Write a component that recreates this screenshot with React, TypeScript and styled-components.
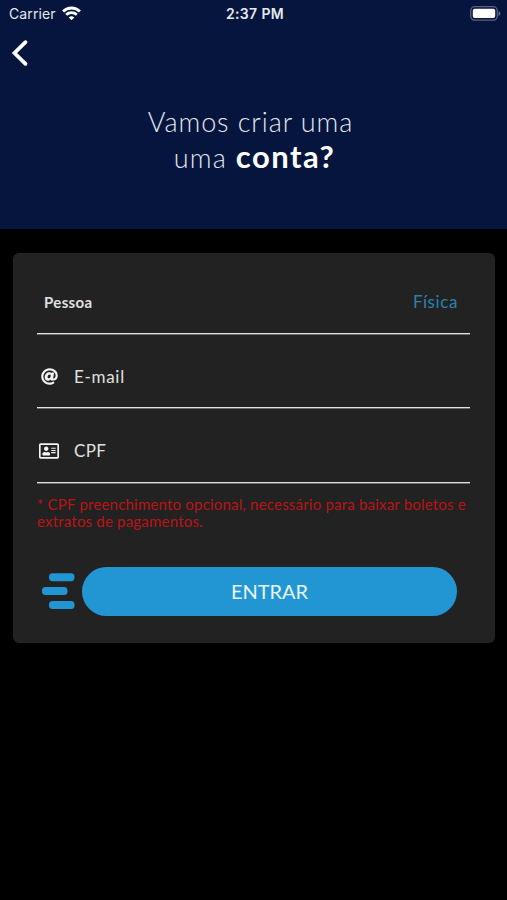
import React from "react";
import styled, { createGlobalStyle } from "styled-components";
import { FaAt, FaRegAddressCard } from "react-icons/fa";

const GlobalStyle = createGlobalStyle`
  *, *::before, *::after { box-sizing: border-box; }
  body { margin: 0; background: #000; font-family: Lato, sans-serif; }
`;

const Screen = styled.main`
  width: 507px;
  height: 900px;
  background: #000;
  overflow: hidden;
`;

const Header = styled.header`
  height: 229px;
  background: #05153d;
  color: #fff;
`;

const StatusBar = styled.div`
  height: 27px;
  padding: 0 6px 0 9px;
  display: grid;
  grid-template-columns: 1fr auto 1fr;
  align-items: center;
  font-family: Inter, sans-serif;
  font-size: 14px;
  color: #e6e9f0;
`;

const Carrier = styled.div`
  display: flex;
  align-items: center;
  gap: 6px;
  letter-spacing: 0.12px;
`;

const Clock = styled.div`
  font-size: 14px;
  font-weight: 600;
  letter-spacing: 0.35px;
`;

const BatterySlot = styled.div`
  display: flex;
  justify-content: flex-end;
`;

const BackButton = styled.button`
  display: block;
  width: 40px;
  height: 52px;
  padding: 0 0 0 10px;
  border: 0;
  background: none;
  color: #fff;
  svg { display: block; }
`;

const Title = styled.h1`
  margin: 25px 0 0;
  padding-right: 6px;
  text-align: center;
  font-size: 27px;
  line-height: 35px;
  font-weight: 300;
  color: #e3e7f0;
`;

const TitleLine = styled.span<{ $spacing: number; $indent?: number }>`
  display: block;
  height: 35px;
  padding-left: ${(p) => p.$indent ?? 0}px;
  letter-spacing: ${(p) => p.$spacing}px;
  b {
    font-size: 31px;
    font-weight: 700;
    color: #fff;
    letter-spacing: 1.5px;
  }
`;

const Card = styled.form`
  margin: 24px 12px 0 13px;
  height: 390px;
  padding: 18px 25px 0 24px;
  border-radius: 6px;
  background: #222;
`;

const Field = styled.div`
  height: 62.5px;
  border-bottom: 1px solid #e2e2e2;
  box-shadow: 0 1px 0 #6b6b6b;
  display: flex;
  align-items: center;
  color: #e0e0e0;
  & + & { margin-top: 12px; }
`;

const PersonField = styled(Field)`
  justify-content: space-between;
  padding: 0 12px 0 7px;
`;

const PersonLabel = styled.span`
  font-size: 15px;
  font-weight: 700;
  letter-spacing: 0.35px;
`;

const PersonValue = styled.span`
  font-size: 17px;
  letter-spacing: 0.6px;
  color: #2b82ae;
`;

const IconSlot = styled.span<{ $inset: number }>`
  width: 37px;
  padding-left: ${(p) => p.$inset}px;
  display: flex;
  align-items: center;
  color: #f4f4f4;
`;

const FieldLabel = styled.span<{ $spacing: number }>`
  font-size: 17px;
  letter-spacing: ${(p) => p.$spacing}px;
`;

const Notice = styled.p`
  margin: 13px 0 0;
  font-size: 15px;
  line-height: 17.5px;
  letter-spacing: 0.2px;
  white-space: nowrap;
  color: #b91414;
`;

const Actions = styled.div`
  margin-top: 36px;
  padding-left: 5px;
  display: flex;
  align-items: center;
  gap: 7px;
`;

const SubmitButton = styled.button`
  width: 375px;
  height: 49px;
  padding: 0;
  border: 0;
  border-radius: 25px;
  background: #2196d3;
  color: #e9f6fd;
  font-family: Lato, sans-serif;
  font-size: 20px;
  letter-spacing: 0;
`;

const WifiIcon = () => (
  <svg width="19" height="15" viewBox="0 0 19 15" fill="none" stroke="#fff" strokeWidth="2.8">
    <path d="M1.1 5.4a12.1 12.1 0 0 1 16.8 0" />
    <path d="M4.2 8.8a7.7 7.7 0 0 1 10.6 0" />
    <path d="M9.5 14.3 6.7 11.5a4 4 0 0 1 5.6 0Z" fill="#fff" stroke="none" />
  </svg>
);

const BatteryIcon = () => (
  <svg width="31" height="15" viewBox="0 0 31 15">
    <rect x="0.7" y="0.7" width="26.6" height="13.4" rx="4" fill="none" stroke="#59637f" strokeWidth="1.3" />
    <rect x="2.8" y="2.8" width="22.4" height="9.2" rx="2" fill="#fff" />
    <path d="M28.6 5.2c2.4.9 2.4 3.8 0 4.7Z" fill="#69728b" />
  </svg>
);

const ChevronIcon = () => (
  <svg width="20" height="28" viewBox="0 0 20 28" fill="none" stroke="#fff" strokeWidth="3.8">
    <path d="M15.5 3.2 4.5 14 15.5 24.8" strokeLinecap="round" />
  </svg>
);

const SpeedIcon = () => (
  <svg width="33" height="38" viewBox="0 0 33 38" fill="#2196d3">
    <rect x="7" y="1.2" width="25.5" height="8" rx="3.6" />
    <rect x="0" y="15.1" width="25.5" height="8" rx="3.6" />
    <rect x="7" y="29.1" width="25.5" height="8" rx="3.6" />
  </svg>
);

export default function App() {
  return (
    <>
      <GlobalStyle />
      <Screen>
        <Header>
          <StatusBar>
            <Carrier>
              Carrier
              <WifiIcon />
            </Carrier>
            <Clock>2:37 PM</Clock>
            <BatterySlot>
              <BatteryIcon />
            </BatterySlot>
          </StatusBar>
          <BackButton type="button" aria-label="Voltar">
            <ChevronIcon />
          </BackButton>
          <Title>
            <TitleLine $spacing={0.9}>Vamos criar uma</TitleLine>
            <TitleLine $spacing={1.3} $indent={8}>
              uma <b>conta?</b>
            </TitleLine>
          </Title>
        </Header>
        <Card onSubmit={(e) => e.preventDefault()}>
          <PersonField>
            <PersonLabel>Pessoa</PersonLabel>
            <PersonValue>Física</PersonValue>
          </PersonField>
          <Field>
            <IconSlot $inset={4}>
              <FaAt size={17} />
            </IconSlot>
            <FieldLabel $spacing={0.7}>E-mail</FieldLabel>
          </Field>
          <Field>
            <IconSlot $inset={2}>
              <FaRegAddressCard size={20} />
            </IconSlot>
            <FieldLabel $spacing={0.3}>CPF</FieldLabel>
          </Field>
          <Notice>
            * CPF preenchimento opcional, necessário para baixar boletos e
            <br />
            extratos de pagamentos.
          </Notice>
          <Actions>
            <SpeedIcon />
            <SubmitButton type="submit">ENTRAR</SubmitButton>
          </Actions>
        </Card>
      </Screen>
    </>
  );
}
